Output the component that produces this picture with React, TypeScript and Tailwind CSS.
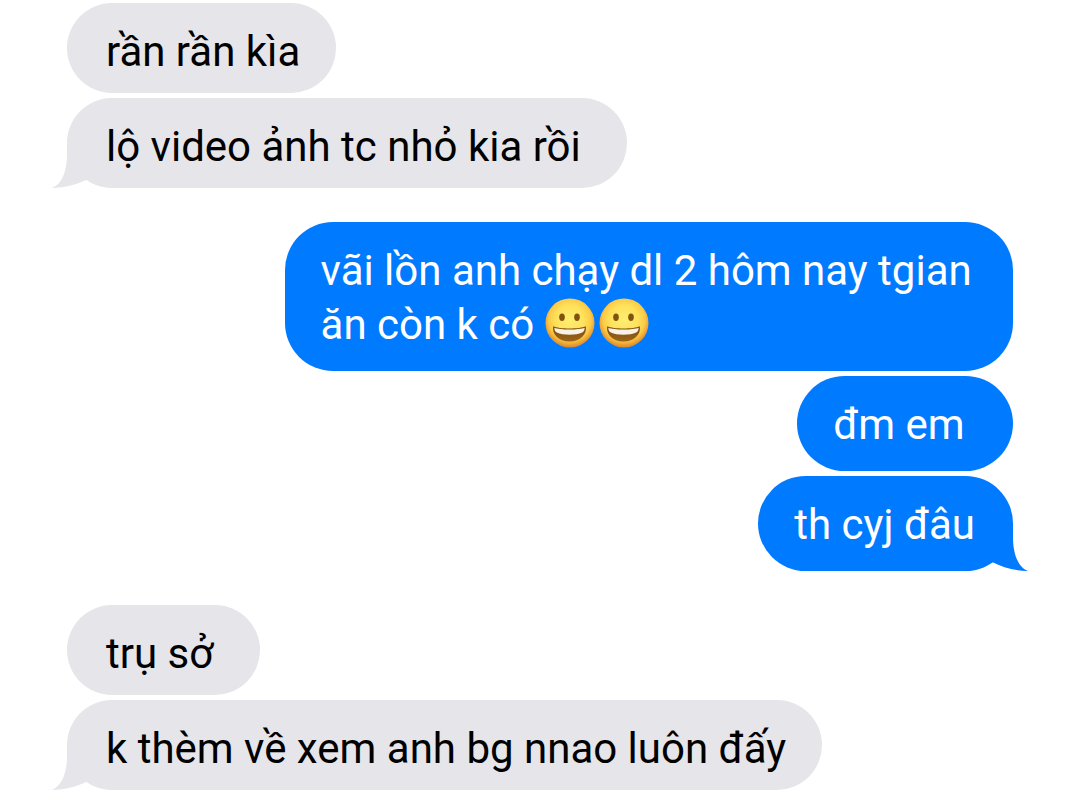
import type { ReactNode } from "react";
import clsx from "clsx";

type Message = {
    id: number;
    text: string;
    smiles?: number;
    tail?: boolean;
};

type Group = {
    id: number;
    mine: boolean;
    messages: Message[];
};

// some messages end in the space that the keyboard adds after a word
const groups: Group[] = [
    {
        id: 1,
        mine: false,
        messages: [
            { id: 1, text: "rần rần kìa" },
            { id: 2, text: "lộ video ảnh tc nhỏ kia rồi\u00a0", tail: true },
        ],
    },
    {
        id: 2,
        mine: true,
        messages: [
            { id: 3, text: "vãi lồn anh chạy dl 2 hôm nay tgian ăn còn k có", smiles: 2 },
            { id: 4, text: "đm em\u00a0" },
            { id: 5, text: "th cyj đâu", tail: true },
        ],
    },
    {
        id: 3,
        mine: false,
        messages: [
            { id: 6, text: "trụ sở\u00a0" },
            { id: 7, text: "k thèm về xem anh bg nnao luôn đấy", tail: true },
        ],
    },
];

const Smile = ({ id }: { id: string }) => {
    return (
        <svg role="img" aria-label="😀" viewBox="0 0 50 50" className="mr-1 inline-block size-[50px] align-[-9px]">
            <defs>
                <radialGradient id={id} cx="0.5" cy="0.43" r="0.57">
                    <stop offset="0" stopColor="#ffee70" />
                    <stop offset="0.5" stopColor="#fee25c" />
                    <stop offset="0.75" stopColor="#fccb47" />
                    <stop offset="1" stopColor="#dd8628" />
                </radialGradient>
                <linearGradient id={id + "-mouth"} x1="0" y1="0" x2="0" y2="1">
                    <stop offset="0" stopColor="#7a4a10" />
                    <stop offset="1" stopColor="#9c6618" />
                </linearGradient>
            </defs>
            <circle cx="25" cy="25" r="24.5" fill={`url(#${id})`} />
            <ellipse cx="17" cy="19.3" rx="2.8" ry="3.7" fill="#80520f" />
            <ellipse cx="32" cy="19.3" rx="2.8" ry="3.7" fill="#80520f" />
            <path d="M8.2 28.2C14 31.2 35 31.2 40.8 28.2C42.2 36 35.5 43.6 24.5 43.6C13.5 43.6 6.8 36 8.2 28.2Z" fill={`url(#${id}-mouth)`} />
            <path d="M9.3 29.8C15 32.2 34 32.2 39.7 29.8C39.6 32 38.8 33.8 37.2 34.6C31 37.6 18 37.6 11.8 34.6C10.2 33.8 9.4 32 9.3 29.8Z" fill="#f7f1e6" />
        </svg>
    );
};

const Tail = ({ mine }: { mine: boolean }) => {
    return (
        <svg
            aria-hidden="true"
            viewBox="0 0 50 48"
            className={clsx(
                "absolute bottom-0 h-12 w-[50px]",
                mine ? "-right-4 -scale-x-100 text-[#007aff]" : "-left-4 text-[#e5e5ea]"
            )}
        >
            <path d="M16 0V14C16 31 11 44 1 48C14 48 26 44.5 37 39L50 40V0Z" fill="currentColor" />
        </svg>
    );
};

const Bubble = ({ mine, tail, children }: { mine: boolean; tail?: boolean; children: ReactNode }) => {
    return (
        <li
            className={clsx(
                "relative rounded-[48px]",
                mine ? "max-w-[77%] bg-[#007aff] pt-[22px] pr-[38px] pb-[19px] pl-9 text-white" : "max-w-[84%] bg-[#e5e5ea] pt-[22px] pr-9 pb-3.5 pl-[39px] text-black"
            )}
        >
            {tail && <Tail mine={mine} />}
            <p className="relative">{children}</p>
        </li>
    );
};

export default function App() {
    return (
        <main className="flex flex-col gap-[34px] bg-white px-[67px] pt-[3px] pb-3 font-['Roboto','Liberation_Sans',sans-serif] text-[42px] leading-[54px]">
            {groups.map((group) => (
                <ul key={group.id} className={clsx("flex flex-col gap-[5px]", group.mine ? "items-end" : "items-start")}>
                    {group.messages.map((message) => (
                        <Bubble key={message.id} mine={group.mine} tail={message.tail}>
                            {message.text}
                            {message.smiles && " "}
                            {message.smiles && (
                                <span className="whitespace-nowrap">
                                    {Array.from({ length: message.smiles }, (_, i) => (
                                        <Smile key={i} id={`smile-${message.id}-${i}`} />
                                    ))}
                                </span>
                            )}
                        </Bubble>
                    ))}
                </ul>
            ))}
        </main>
    );
}
